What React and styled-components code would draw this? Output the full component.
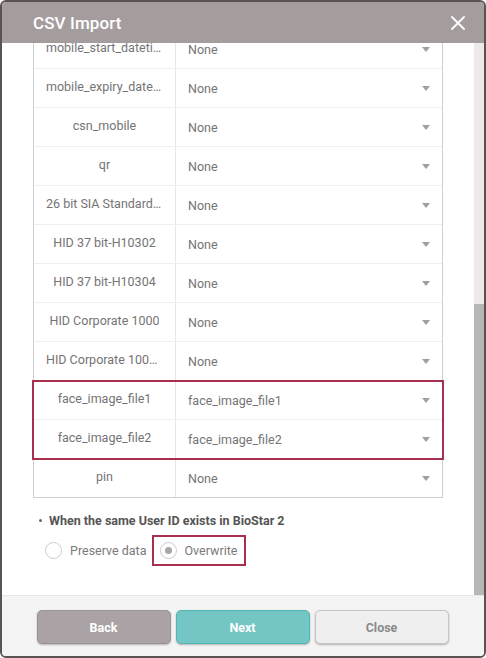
import React, { useLayoutEffect, useRef } from "react";
import styled, { createGlobalStyle } from "styled-components";

const Global = createGlobalStyle`
  html, body { margin: 0; padding: 0; background: #ffffff; }
  body { font-family: Roboto, "Noto Sans", Arial, sans-serif; }
  * { box-sizing: border-box; }
`;

const Window = styled.div`
  width: 486px;
  height: 658px;
  border: 2px solid #5b5254;
  border-radius: 6px;
  display: flex;
  flex-direction: column;
  overflow: hidden;
  background: #ffffff;
`;

const Header = styled.div`
  height: 41px;
  flex: 0 0 41px;
  background: #a59c9e;
  display: flex;
  align-items: center;
  justify-content: space-between;
  padding: 0 18px 0 31px;
`;

const Title = styled.div`
  color: #ffffff;
  font-size: 17px;
  font-weight: 500;
  letter-spacing: 0.1px;
`;

const CloseBtn = styled.button`
  border: 0;
  background: transparent;
  padding: 0;
  width: 16px;
  height: 16px;
  display: flex;
  align-items: center;
  justify-content: center;
  cursor: pointer;
`;

const Body = styled.div`
  flex: 1 1 auto;
  min-height: 0;
  display: flex;
`;

const Viewport = styled.div`
  flex: 1 1 auto;
  min-width: 0;
  overflow: hidden;
  padding: 10px 31px 0 31px;
`;

const ScrollTrack = styled.div`
  flex: 0 0 10px;
  background: #eeeaea;
  display: flex;
  flex-direction: column;
  justify-content: flex-end;
`;

const ScrollThumb = styled.div`
  height: 291px;
  background: #b9b7b5;
`;

const Table = styled.div`
  border: 1px solid #cfcfcf;
  border-bottom: 0;
`;

const Row = styled.div`
  display: grid;
  grid-template-columns: 142px 1fr;
  height: 39px;
  border-bottom: 1px solid ${(p) => (p.$last ? "#cfcfcf" : "#efefef")};
`;

const Highlight = styled.div`
  outline: 2px solid #a8304e;
  outline-offset: -1px;
  margin: 0 -1px;
  padding: 0 1px;
  position: relative;
  z-index: 1;
`;

const FieldCell = styled.div`
  border-right: 1px solid #e6e6e6;
  display: flex;
  align-items: center;
  justify-content: center;
  padding: 0 12px 4px;
  color: #747474;
  font-size: 12.5px;
  white-space: nowrap;
  overflow: hidden;
`;

const FieldText = styled.span`
  overflow: hidden;
  text-overflow: ellipsis;
  white-space: nowrap;
`;

const SelectCell = styled.div`
  display: flex;
  align-items: center;
  justify-content: space-between;
  padding: 0 12px 0 12px;
  color: #747474;
  font-size: 12.5px;
`;

const Arrow = styled.span`
  width: 0;
  height: 0;
  border-left: 4px solid transparent;
  border-right: 4px solid transparent;
  border-top: 5px solid #a0a0a0;
`;

const Options = styled.div`
  padding: 15px 0 0 6px;
  height: 97px;
`;

const Heading = styled.div`
  display: flex;
  align-items: center;
  gap: 7px;
  color: #555555;
  font-size: 12.5px;
  font-weight: 700;
`;

const Bullet = styled.span`
  width: 3px;
  height: 3px;
  border-radius: 50%;
  background: #666;
`;

const RadioRow = styled.div`
  display: flex;
  align-items: center;
  margin-top: 7px;
`;

const RadioLabel = styled.label`
  display: flex;
  align-items: center;
  gap: 8px;
  height: 31px;
  padding: 0 7px 0 ${(p) => (p.$boxed ? "6px" : "5px")};
  color: #7a7a7a;
  font-size: 12.5px;
  border: 2px solid ${(p) => (p.$boxed ? "#a8304e" : "transparent")};
  margin-left: ${(p) => (p.$boxed ? "-4px" : "-1px")};
`;

const RadioCircle = styled.span`
  width: 17px;
  height: 17px;
  border-radius: 50%;
  border: 1px solid #cccccc;
  background: #ffffff;
  display: flex;
  align-items: center;
  justify-content: center;
  &::after {
    content: "";
    width: 7px;
    height: 7px;
    border-radius: 50%;
    background: ${(p) => (p.$checked ? "#a9a6a6" : "transparent")};
  }
`;

const Footer = styled.div`
  flex: 0 0 61px;
  height: 61px;
  background: #f5f4f4;
  border-top: 1px solid #e8e6e6;
  display: flex;
  justify-content: center;
  gap: 5px;
  padding: 14px 1px 0 0;
`;

const variants = {
  back: { bg: "#aaa2a4", border: "#9a9294", color: "#ffffff" },
  next: { bg: "#74c6c4", border: "#52b6b4", color: "#ffffff" },
  close: { bg: "#efefef", border: "#c6c6c6", color: "#8a8a8a" },
};

const Button = styled.button`
  width: 134px;
  height: 34px;
  border-radius: 5px;
  border: 1px solid ${(p) => variants[p.$v].border};
  background: ${(p) => variants[p.$v].bg};
  color: ${(p) => variants[p.$v].color};
  font-family: Roboto, Arial, sans-serif;
  font-weight: 700;
  font-size: 12.5px;
  box-shadow: 0 1px 2px rgba(0, 0, 0, 0.28);
  cursor: pointer;
`;

const hiddenFields = [
  "user_id",
  "name",
  "department",
  "user_title",
  "phone",
  "email",
  "user_group",
  "start_datetime",
  "expiry_datetime",
  "csn",
  "wiegand",
  "mobile_csn",
];

const visibleFields = [
  ["mobile_start_datetime", "None"],
  ["mobile_expiry_datetime", "None"],
  ["csn_mobile", "None"],
  ["qr", "None"],
  ["26 bit SIA Standard-H10301", "None"],
  ["HID 37 bit-H10302", "None"],
  ["HID 37 bit-H10304", "None"],
  ["HID Corporate 1000", "None"],
  ["HID Corporate 1000 48bit", "None"],
];

function MapRow({ field, value, last }) {
  return (
    <Row $last={last}>
      <FieldCell>
        <FieldText>{field}</FieldText>
      </FieldCell>
      <SelectCell>
        <span>{value}</span>
        <Arrow />
      </SelectCell>
    </Row>
  );
}

export default function App() {
  const viewRef = useRef(null);
  useLayoutEffect(() => {
    if (viewRef.current) viewRef.current.scrollTop = viewRef.current.scrollHeight;
  }, []);

  return (
    <>
      <Global />
      <Window>
        <Header>
          <Title>CSV Import</Title>
          <CloseBtn aria-label="Close">
            <svg width="14" height="14" viewBox="0 0 14 14">
              <path d="M1 1L13 13M13 1L1 13" stroke="#ffffff" strokeWidth="1.8" strokeLinecap="round" />
            </svg>
          </CloseBtn>
        </Header>
        <Body>
          <Viewport ref={viewRef}>
            <Table>
              {hiddenFields.map((f) => (
                <MapRow key={"h" + f} field={f} value="None" />
              ))}
              {visibleFields.map(([f, v]) => (
                <MapRow key={f} field={f} value={v} />
              ))}
              <Highlight>
                <MapRow field="face_image_file1" value="face_image_file1" />
                <MapRow field="face_image_file2" value="face_image_file2" />
              </Highlight>
              <MapRow field="pin" value="None" last />
            </Table>
            <Options>
              <Heading>
                <Bullet />
                When the same User ID exists in BioStar 2
              </Heading>
              <RadioRow>
                <RadioLabel>
                  <RadioCircle />
                  Preserve data
                </RadioLabel>
                <RadioLabel $boxed>
                  <RadioCircle $checked />
                  Overwrite
                </RadioLabel>
              </RadioRow>
            </Options>
          </Viewport>
          <ScrollTrack>
            <ScrollThumb />
          </ScrollTrack>
        </Body>
        <Footer>
          <Button $v="back">Back</Button>
          <Button $v="next">Next</Button>
          <Button $v="close">Close</Button>
        </Footer>
      </Window>
    </>
  );
}
